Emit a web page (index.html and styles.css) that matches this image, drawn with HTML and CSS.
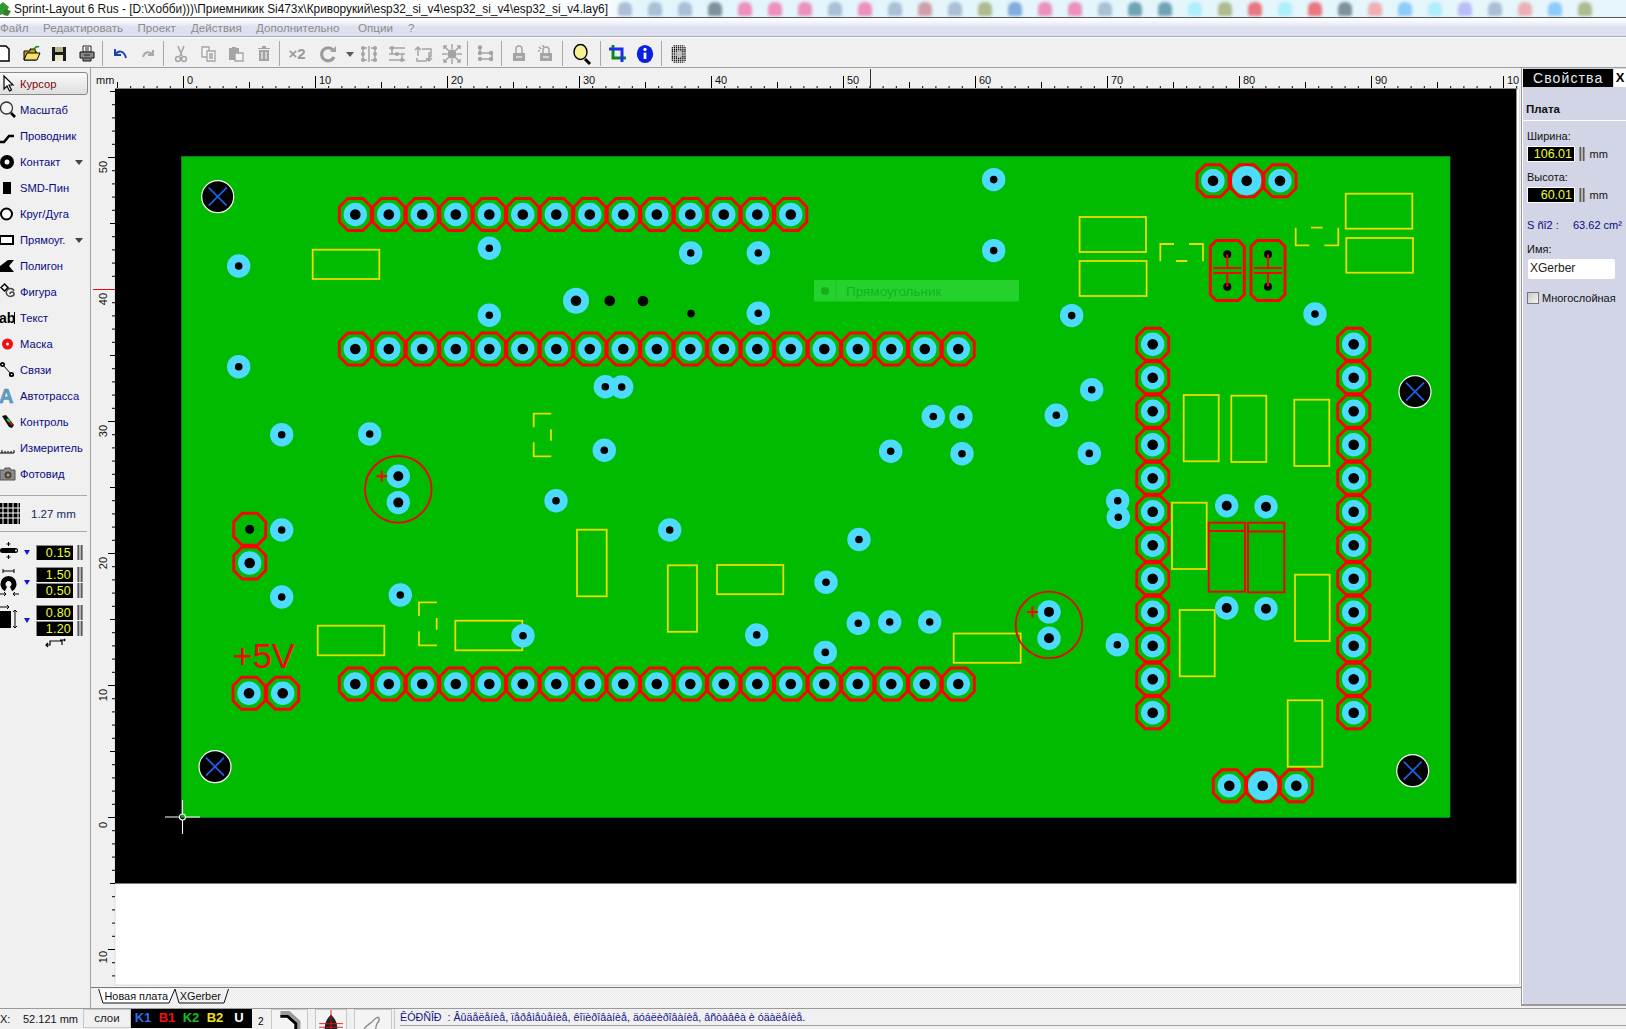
FILE: index.html
```html
<!DOCTYPE html>
<html lang="ru">
<head>
<meta charset="utf-8">
<title>Sprint-Layout 6 Rus</title>
<link rel="stylesheet" href="styles.css">
</head>
<body>
<div class="app">
  <header class="titlebar">
    <svg class="appicon" viewBox="0 0 12 17" width="12" height="17"><path class="ai-g" d="M-2 5 3 1 9 6 6 12 0 14Z"/><path class="ai-r" d="M5 8 11 10 8 15 3 14Z"/></svg>
    <span class="titletext">Sprint-Layout 6 Rus - [D:\Хобби)))\Приемникик Si473x\Криворукий\esp32_si_v4\esp32_si_v4\esp32_si_v4.lay6]</span>
    <div class="bottles">
      <i class="b-grey"></i><i class="b-grey"></i><i class="b-grey"></i><i class="b-dark"></i><i class="b-pink"></i><i class="b-pink"></i><i class="b-pink"></i><i class="b-grey"></i><i class="b-pink"></i><i class="b-grey"></i><i class="b-rose"></i><i class="b-grey"></i><i class="b-olive"></i><i class="b-blue"></i><i class="b-pink"></i><i class="b-pink"></i><i class="b-grey"></i><i class="b-teal"></i><i class="b-teal"></i><i class="b-cyan"></i><i class="b-olive"></i><i class="b-red"></i><i class="b-cyan"></i><i class="b-red"></i><i class="b-dark"></i><i class="b-salmon"></i><i class="b-sky"></i><i class="b-cyan"></i><i class="b-violet"></i><i class="b-grey"></i><i class="b-salmon"></i><i class="b-sky"></i><i class="b-olive"></i>
    </div>
  </header>

  <nav class="menubar">
    <span class="m1">Файл</span><span class="m2">Редактировать</span><span class="m3">Проект</span><span class="m4">Действия</span><span class="m5">Дополнительно</span><span class="m6">Опции</span><span>?</span>
  </nav>

  <div class="toolbar">
    <button class="tb first"><svg viewBox="0 0 20 20"><path class="doc" d="M5 2H12L15 5V17H5Z"/></svg></button>
    <button class="tb"><svg viewBox="0 0 20 20"><path class="fold" d="M2 7H8V5H13V7H14V16H2Z"/><path class="fold2" d="M2 16 5 9H18L15 16Z"/><path class="grn" d="M12 6C13 3 15 2 17 3"/></svg></button>
    <button class="tb"><svg viewBox="0 0 20 20"><rect class="flop" x="3" y="3" width="14" height="14"/><rect class="flop-a" x="6" y="3" width="8" height="5"/><rect class="flop-b" x="6" y="11" width="8" height="6"/></svg></button>
    <button class="tb"><svg viewBox="0 0 20 20"><path class="prn" d="M6 2H14V8H6Z"/><path class="prn2" d="M3 8H17V14H14V17H6V14H3Z"/><path class="ln" d="M7 11H13M7 14H13M8 4H12M8 6H12"/></svg></button>
    <span class="sep"></span>
    <button class="tb"><svg viewBox="0 0 20 20"><path class="undo" d="M5 5V11H11M5 11C8 6 14 6 16 14"/></svg></button>
    <button class="tb"><svg viewBox="0 0 20 20"><path class="redo" d="M15 6V11H10M15 11C12 7 7 7 5 13"/></svg></button>
    <span class="sep"></span>
    <button class="tb"><svg viewBox="0 0 20 20"><path class="off" d="M7 2 11 12M13 2 9 12"/><circle class="off" cx="7" cy="15" r="2.4"/><circle class="off" cx="13" cy="15" r="2.4"/></svg></button>
    <button class="tb"><svg viewBox="0 0 20 20"><path class="off-w" d="M3 3H10V13H3Z"/><path class="off-w" d="M8 7H16V17H8Z"/><path class="off" d="M10 10H14M10 12H14M10 14H14"/></svg></button>
    <button class="tb"><svg viewBox="0 0 20 20"><path class="off-f" d="M3 4H13V16H3Z"/><path class="off-w" d="M9 9H17V17H9Z"/><path class="off-f" d="M6 3H10V6H6Z"/></svg></button>
    <button class="tb"><svg viewBox="0 0 20 20"><path class="off-f" d="M5 6H15V17H5Z"/><path class="off-f" d="M4 4H16V5H4ZM8 2H12V4H8Z"/><path class="off-wl" d="M8 8V15M12 8V15"/></svg></button>
    <span class="sep"></span>
    <button class="tb tb-x2">×2</button>
    <button class="tb tb-rot"><svg viewBox="0 0 20 20"><path class="rot" d="M15 6A6.5 6.5 0 1 0 16 13"/><path class="off-f" d="M12 8H18V2Z"/></svg></button>
    <button class="tb tb-arr"><svg viewBox="0 0 8 20"><path class="arrow" d="M0 8H8L4 13Z"/></svg></button>
    <button class="tb"><svg viewBox="0 0 20 20"><path class="off" d="M10 2V18M2 4H8M2 16H8M12 4H18M12 16H18M4 4V16M16 4V16"/><circle class="off-f" cx="4" cy="4" r="2"/><circle class="off-f" cx="4" cy="16" r="2"/><circle class="off-f" cx="16" cy="4" r="2"/><circle class="off-f" cx="16" cy="16" r="2"/><circle class="off-f" cx="4" cy="10" r="2"/><circle class="off-f" cx="16" cy="10" r="2"/></svg></button>
    <button class="tb"><svg viewBox="0 0 20 20"><path class="off" d="M2 4H18M2 16H18M2 10H18M5 4V10M15 10V16"/><circle class="off-f" cx="5" cy="4" r="2"/><circle class="off-f" cx="15" cy="16" r="2"/><circle class="off-f" cx="10" cy="10" r="2"/></svg></button>
    <button class="tb"><svg viewBox="0 0 20 20"><path class="off" d="M4 3V12M1 6 4 3 7 6M15 17V8M12 14 15 17 18 14M8 5H17V12L12 17H3V14"/></svg></button>
    <button class="tb"><svg viewBox="0 0 20 20"><circle class="off-f" cx="10" cy="10" r="4.500"/><path class="off" d="M2 2 7 7M18 2 13 7M2 18 7 13M18 18 13 13M10 0V5M10 15V20M0 10H5M15 10H20M2 5V2H5M15 2H18V5M2 15V18H5M15 18H18V15"/></svg></button>
    <span class="sep"></span>
    <button class="tb"><svg viewBox="0 0 20 20"><path class="off" d="M5 3V9L17 9V15H5"/><circle class="off-f" cx="5" cy="3.500" r="2.200"/><circle class="off-f" cx="5" cy="9" r="2.200"/><circle class="off-f" cx="16" cy="9" r="2.200"/><circle class="off-f" cx="5" cy="15" r="2.200"/><circle class="off-f" cx="16" cy="15" r="2.200"/></svg></button>
    <span class="sep"></span>
    <button class="tb"><svg viewBox="0 0 20 20"><path class="off" d="M7 9V5A3 3 0 0 1 13 5V9"/><rect class="off-f" x="4" y="9" width="12" height="8"/><path class="off-wl" d="M7 13H13"/></svg></button>
    <button class="tb"><svg viewBox="0 0 20 20"><path class="off" d="M7 9V6A3 3 0 0 1 13 6V9M3 3 5 5M2 7H4M7 1V3"/><rect class="off-f" x="4" y="9" width="12" height="8"/><path class="off-wl" d="M7 13H13"/></svg></button>
    <span class="sep"></span>
    <button class="tb tb-mag"><svg viewBox="0 0 20 22"><ellipse class="mag" cx="8.500" cy="9" rx="6.500" ry="7.500"/><path class="mag-h" d="M13 16 18 21"/></svg></button>
    <span class="sep"></span>
    <button class="tb"><svg viewBox="0 0 20 20"><path class="crop-g" d="M5 1V14H18"/><path class="crop-b" d="M1 5H14V18"/></svg></button>
    <button class="tb"><svg viewBox="0 0 20 22"><ellipse class="info" cx="10" cy="11" rx="9" ry="10"/><circle class="info-i" cx="10" cy="6" r="1.800"/><path class="info-l" d="M10 9.500V16.500"/></svg></button>
    <span class="sep"></span>
    <button class="tb"><svg viewBox="0 0 20 22"><path class="dots" d="M4 2H16M2 4H18M2 6H18M2 8H18M2 10H18M2 12H18M2 14H18M2 16H18M2 18H18M4 20H16"/><ellipse class="dots-h" cx="10" cy="11" rx="3" ry="4"/></svg></button>
  </div>

  <div class="main">
    <aside class="tools">
      <div class="tool active"><svg viewBox="0 0 20 20"><path class="i-cursor" d="M4 2V15L7 12 9.500 17 11.500 16 9 11H13Z"/></svg><span class="cursor-name">Курсор</span></div>
      <div class="tool"><svg viewBox="0 0 20 20"><circle class="i-mag" cx="6.500" cy="8" r="6"/><path class="i-stroke3" d="M11 13 15 17"/></svg><span>Масштаб</span></div>
      <div class="tool"><svg viewBox="0 0 20 20"><path class="i-stroke3" d="M0 16H4L9 10H14"/></svg><span>Проводник</span></div>
      <div class="tool"><svg viewBox="0 0 20 20"><circle class="i-black" cx="7" cy="10" r="7"/><circle class="i-white" cx="7" cy="10" r="2.500"/></svg><span>Контакт</span><b class="caret"></b></div>
      <div class="tool"><svg viewBox="0 0 20 20"><rect class="i-black" x="3" y="4" width="8" height="12"/></svg><span>SMD-Пин</span></div>
      <div class="tool"><svg viewBox="0 0 20 20"><circle class="i-ring" cx="6.500" cy="10" r="5.500"/></svg><span>Круг/Дуга</span></div>
      <div class="tool"><svg viewBox="0 0 20 20"><rect class="i-ring" x="0" y="6" width="13" height="8"/></svg><span>Прямоуг.</span><b class="caret"></b></div>
      <div class="tool"><svg viewBox="0 0 20 20"><path class="i-black" d="M0 16V10L8 4H14L9 10 14 16Z"/></svg><span>Полигон</span></div>
      <div class="tool"><svg viewBox="0 0 20 20"><path class="i-diamond" d="M4.500 2 8 5.500 4.500 9 1 5.500Z"/><path class="i-spiral" d="M10 12A2 2 0 1 1 12 14A4 4 0 1 1 14 9"/></svg><span>Фигура</span></div>
      <div class="tool"><svg class="ab-svg" viewBox="0 0 20 20"><text class="i-ab" x="-1" y="14.500">ab</text><path class="i-line" d="M14.500 4V16"/></svg><span>Текст</span></div>
      <div class="tool"><svg viewBox="0 0 20 20"><circle class="i-red" cx="7.500" cy="10" r="5.500"/><circle class="i-white" cx="7.500" cy="10" r="1.500"/></svg><span>Маска</span></div>
      <div class="tool"><svg viewBox="0 0 20 20"><path class="i-line" d="M3 5 11 14"/><circle class="i-hole" cx="2.500" cy="4.500" r="1.700"/><circle class="i-hole" cx="11.500" cy="14.500" r="1.700"/></svg><span>Связи</span></div>
      <div class="tool"><svg viewBox="0 0 20 20"><text class="i-a" x="-1" y="17">A</text></svg><span>Автотрасса</span></div>
      <div class="tool"><svg viewBox="0 0 20 20"><path class="i-probe" d="M2 4 6 3 14 13 12 16 9 15Z"/><path class="i-probe-g" d="M7 7 10 10"/><path class="i-probe-r" d="M10 10 12 13"/></svg><span>Контроль</span></div>
      <div class="tool"><svg viewBox="0 0 20 20"><path class="i-line" d="M0 15H14M2 15V12M5 15V13M8 15V13M11 15V13M14 15V12"/></svg><span>Измеритель</span></div>
      <div class="tool"><svg viewBox="0 0 20 20"><path class="i-cam" d="M0 6H4L5 4H10L11 6H15V16H0Z"/><circle class="i-cam-l" cx="8" cy="11" r="3.500"/><circle class="i-cam-o" cx="8" cy="11" r="1.500"/></svg><span>Фотовид</span></div>

      <div class="gridrow">
        <svg class="gridicon" viewBox="0 0 20 21"><rect class="i-black" width="20" height="21"/><path class="i-gridl" d="M0 5H20M0 10H20M0 15H20M3 0V21M8 0V21M13 0V21M18 0V21"/></svg>
        <span>1.27 mm</span>
      </div>

      <div class="params">
        <div class="pgroup">
          <svg class="picon" viewBox="0 0 20 20"><path class="i-line" d="M8.500 0V4M6.500 2H10.500M8.500 13V17M6.500 15H10.500"/><rect class="i-black" x="0" y="6" width="18" height="5" rx="2.500"/><circle class="i-white" cx="16" cy="8.500" r="1"/></svg>
          <b class="bluecaret"></b>
          <div class="pfields"><div class="pfield"><output>0.15</output><i class="spin"></i></div></div>
        </div>
        <div class="pgroup">
          <svg class="picon" viewBox="0 0 20 28"><path class="i-line" d="M3 3H14M3 1V5M14 1V5"/><path class="i-cshape" d="M6 21A5.500 5.500 0 1 1 11 21"/><path class="i-line" d="M0 26H6M4 24 6 26 4 28M13 26H19M15 24 13 26 15 28"/></svg>
          <b class="bluecaret"></b>
          <div class="pfields"><div class="pfield"><output>1.50</output><i class="spin"></i></div><div class="pfield"><output>0.50</output><i class="spin"></i></div></div>
        </div>
        <div class="pgroup">
          <svg class="picon" viewBox="0 0 20 32"><path class="i-line" d="M0 3H9M7 1 9 3 7 5"/><rect class="i-black" x="0" y="7" width="11" height="17"/><path class="i-line" d="M15 6V24M13 8 15 6 17 8M13 22 15 24 17 22"/></svg>
          <b class="bluecaret"></b>
          <div class="pfields"><div class="pfield"><output>0.80</output><i class="spin"></i></div><div class="pfield"><output>1.20</output><i class="spin"></i></div></div>
        </div>
        <svg class="swap" viewBox="0 0 22 8"><path class="i-swap" d="M1 6H5V2H17V6M3 4 1 6 3 8M15 1H20M19 0 20 1 19 2"/></svg>
      </div>
    </aside>

    <section class="center">
      <svg class="work" viewBox="91 68 1430 918" width="1430" height="918">
        <defs>
          <pattern id="hticks" patternUnits="userSpaceOnUse" x="183" y="68" width="132" height="21">
            <path class="tick" d="M.5 8V21M66.500 14V21M13.700 18V21M26.900 18V21M40.100 18V21M53.300 18V21M79.700 18V21M92.900 18V21M106.100 18V21M119.300 18V21"/>
          </pattern>
          <pattern id="vticks" patternUnits="userSpaceOnUse" x="91" y="157" width="24" height="132">
            <path class="tick" d="M17 .5H24M19 66.500H24M21 13.700H24M21 26.900H24M21 40.100H24M21 53.300H24M21 79.700H24M21 92.900H24M21 106.100H24M21 119.300H24"/>
          </pattern>
          <path id="oct" class="oct" d="M-7.500-16H7.500L16-7.500V7.500L7.500 16H-7.500L-16 7.500V-7.500Z"/>
          <g id="via"><circle class="cu" r="11.700"/><circle class="hole" r="3.800"/></g>
          <g id="via2"><circle class="cu" r="11.700"/><circle class="hole" r="5"/></g>
          <g id="via3"><circle class="cu" r="13"/><circle class="hole" r="5.300"/></g>
          <g id="pad"><use href="#oct"/><circle class="cu" r="11.700"/><circle class="hole" r="5.300"/></g>
          <g id="padbig"><use href="#oct"/><circle class="cu" r="14.700"/><circle class="hole" r="5.300"/></g>
          <g id="padhole"><use href="#oct"/><circle class="hole" r="4.500"/></g>
          <g id="mount"><circle class="mount" r="16"/><path class="mountx" d="M-9-9 9 9M9-9-9 9"/></g>
          <g id="row14">
            <use href="#pad" x="0"/><use href="#pad" x="33.500"/><use href="#pad" x="67"/><use href="#pad" x="100.500"/><use href="#pad" x="134"/><use href="#pad" x="167.500"/><use href="#pad" x="201"/><use href="#pad" x="234.500"/><use href="#pad" x="268"/><use href="#pad" x="301.500"/><use href="#pad" x="335"/><use href="#pad" x="368.500"/><use href="#pad" x="402"/><use href="#pad" x="435.500"/>
          </g>
          <g id="row19">
            <use href="#row14"/><use href="#pad" x="469"/><use href="#pad" x="502.500"/><use href="#pad" x="536"/><use href="#pad" x="569.500"/><use href="#pad" x="603"/>
          </g>
          <g id="col12">
            <use href="#pad" y="0"/><use href="#pad" y="33.500"/><use href="#pad" y="67"/><use href="#pad" y="100.500"/><use href="#pad" y="134"/><use href="#pad" y="167.500"/><use href="#pad" y="201"/><use href="#pad" y="234.500"/><use href="#pad" y="268"/><use href="#pad" y="301.500"/><use href="#pad" y="335"/><use href="#pad" y="368.500"/>
          </g>
          <g id="capbody">
            <path class="oct" d="M-11-30H11L17-24V24L11 30H-11L-17 24V-24Z"/>
            <circle class="hole" cy="-16.300" r="4"/><circle class="hole" cy="16.300" r="4"/>
            <path class="redline" d="M0-16V-3.500M0 3.500V16M-14-2.600H14M-14 2.600H14"/>
          </g>
          <g id="elco">
            <circle class="capring" r="33.300"/>
            <use href="#via2" y="-13"/><use href="#via2" y="13.300"/>
            <path class="redline" d="M-16.600-18.500V-7.500M-22-13H-11"/>
          </g>
        </defs>

        <rect class="rulerbg" x="91" y="68" width="1430" height="918"/>
        <rect class="paper" x="115" y="89" width="1404.500" height="896"/>
        <rect class="pfill-h" x="115" y="68" width="1405" height="21"/>
        <rect class="pfill-v" x="91" y="89" width="24" height="897"/>

        <g class="rlabels">
          <text x="96" y="84">mm</text>
          <text x="187" y="84">0</text><text x="319" y="84">10</text><text x="451" y="84">20</text><text x="583" y="84">30</text><text x="715" y="84">40</text><text x="847" y="84">50</text><text x="979" y="84">60</text><text x="1111" y="84">70</text><text x="1243" y="84">80</text><text x="1375" y="84">90</text><text x="1507" y="84">10</text>
          <text class="vlabel" transform="translate(107 167) rotate(-90)">50</text>
          <text class="vlabel" transform="translate(107 299) rotate(-90)">40</text>
          <text class="vlabel" transform="translate(107 431) rotate(-90)">30</text>
          <text class="vlabel" transform="translate(107 563) rotate(-90)">20</text>
          <text class="vlabel" transform="translate(107 695) rotate(-90)">10</text>
          <text class="vlabel" transform="translate(107 825) rotate(-90)">0</text>
          <text class="vlabel" transform="translate(107 957) rotate(-90)">10</text>
        </g>
        <path class="marker-k" d="M870.500 69V88"/>
        <path class="marker-r" d="M93 289.500H115"/>

        <rect class="canvas" x="115" y="89" width="1401" height="794.500"/>
        <path class="canvas-edge" d="M115 88.500H1516.500V883.500"/>
        <rect class="board" x="181.500" y="156.500" width="1268.500" height="661"/>

        <!-- silkscreen -->
        <g class="silk">
          <rect x="312.700" y="249.700" width="66.600" height="29.300"/>
          <rect x="317.700" y="625.700" width="66.600" height="29.600"/>
          <rect x="455.300" y="620.700" width="67" height="29.600"/>
          <rect x="577" y="529.700" width="29.700" height="66.600"/>
          <rect x="667.800" y="565.300" width="29.200" height="66.500"/>
          <rect x="717" y="565" width="66.300" height="29.200"/>
          <rect x="953.700" y="633.500" width="67" height="29.300"/>
          <rect x="1079.600" y="217" width="66.400" height="35"/>
          <rect x="1079.600" y="261" width="67" height="35"/>
          <rect x="1345.700" y="193.700" width="66.600" height="35"/>
          <rect x="1346.300" y="238" width="66.700" height="34.700"/>
          <rect x="1183.700" y="395" width="35" height="66.300"/>
          <rect x="1231.300" y="395.700" width="35" height="66.300"/>
          <rect x="1294.300" y="399.700" width="35" height="66.300"/>
          <rect x="1172" y="502.700" width="34.700" height="66.300"/>
          <rect x="1179.700" y="610" width="35" height="66.300"/>
          <rect x="1295" y="574.700" width="34.700" height="66.300"/>
          <rect x="1287.700" y="700.300" width="34.600" height="66.400"/>
          <path d="M1160.300 261.300V244H1174M1189 244H1203V261.300M1176 261H1187.300"/>
          <path d="M1295.700 227.700V245.300H1309.300M1324.300 245.300H1338.300V227.700M1311 227.700H1322.700"/>
          <path d="M551.300 413.700H533.700V427.300M533.700 442.300V456.300H551.300M551 429.300V440.700"/>
          <path d="M437 602.300H419V616M419 631.300V645.300H437M436.700 618V629.700"/>
        </g>

        <!-- red outlines -->
        <g class="thinred">
          <rect x="1208.700" y="522.700" width="36.300" height="69"/>
          <path d="M1208.700 531H1245"/>
          <rect x="1248" y="522.700" width="36.300" height="69.600"/>
          <path d="M1248 531.500H1284.300"/>
        </g>
        <use href="#capbody" x="1227.300" y="270.500"/>
        <use href="#capbody" x="1268" y="270.500"/>
        <use href="#elco" x="398.300" y="489.300"/>
        <use href="#elco" x="1049" y="624.900"/>

        <!-- pad rows -->
        <use href="#row14" x="355.300" y="214.500"/>
        <use href="#row19" x="355.300" y="349"/>
        <use href="#row19" x="355.300" y="684"/>
        <use href="#col12" x="1152.700" y="344.300"/>
        <use href="#col12" x="1353.700" y="344.300"/>
        <use href="#pad" x="1213" y="180.700"/><use href="#padbig" x="1246.700" y="180.700"/><use href="#pad" x="1280" y="180.700"/>
        <use href="#pad" x="1229.300" y="785.700"/><use href="#padbig" x="1262.700" y="785.700"/><use href="#pad" x="1296.300" y="785.700"/>
        <use href="#padhole" x="249.700" y="529.300"/><use href="#pad" x="249.700" y="563"/>
        <use href="#pad" x="249" y="693.300"/><use href="#pad" x="282.700" y="693.300"/>

        <!-- vias -->
        <use href="#via" x="238.700" y="266"/><use href="#via" x="238.700" y="366.700"/>
        <use href="#via" x="489.300" y="248.300"/><use href="#via" x="489.300" y="315.300"/>
        <use href="#via3" x="576" y="300.700"/>
        <circle class="hole" cx="609.700" cy="300.700" r="5.300"/><circle class="hole" cx="643" cy="301" r="5.300"/>
        <circle class="hole" cx="691" cy="313.600" r="3.800"/>
        <use href="#via" x="690.700" y="253"/><use href="#via" x="758.300" y="253"/><use href="#via" x="758.300" y="313.200"/>
        <use href="#via" x="605.300" y="386.700"/><use href="#via" x="621.700" y="387"/>
        <use href="#via" x="281.700" y="434.700"/><use href="#via" x="369.700" y="434"/>
        <use href="#via" x="604.300" y="450.300"/><use href="#via" x="556" y="500.700"/>
        <use href="#via" x="669.700" y="530"/><use href="#via" x="281.700" y="530"/><use href="#via" x="281.700" y="597"/>
        <use href="#via" x="400.300" y="595"/><use href="#via" x="523" y="635.700"/>
        <use href="#via" x="993.700" y="179.600"/><use href="#via" x="993.700" y="250.600"/>
        <use href="#via" x="1071.700" y="315.600"/><use href="#via" x="1091.700" y="389.700"/>
        <use href="#via" x="1056.300" y="415.200"/><use href="#via" x="1089.300" y="453.400"/>
        <use href="#via" x="933.300" y="416.500"/><use href="#via" x="961" y="416.900"/>
        <use href="#via" x="890.700" y="451.300"/><use href="#via" x="962" y="453.700"/>
        <use href="#via" x="859" y="539.500"/><use href="#via" x="826" y="582.200"/>
        <use href="#via" x="858.300" y="623.200"/><use href="#via" x="889.700" y="622"/><use href="#via" x="929.700" y="622"/>
        <use href="#via" x="825.300" y="652.400"/><use href="#via" x="756.700" y="634.900"/>
        <use href="#via" x="1117.700" y="500.700"/><use href="#via" x="1118.300" y="517.300"/><use href="#via" x="1117.300" y="644.700"/>
        <use href="#via" x="1315" y="314"/>
        <use href="#via2" x="1226.700" y="505.700"/><use href="#via2" x="1266" y="506.700"/>
        <use href="#via2" x="1226.700" y="608"/><use href="#via2" x="1266" y="608.700"/>

        <use href="#mount" x="217.700" y="196.700"/><use href="#mount" x="1415" y="391.700"/>
        <use href="#mount" x="215" y="766.700"/><use href="#mount" x="1412.700" y="770.700"/>

        <text class="plus5" x="232.500" y="668">+5V</text>

        <rect class="tip" x="814" y="280" width="205" height="21.500"/>
        <circle class="tip-dot" cx="825" cy="291" r="4"/>
        <path class="tip-sep" d="M835.700 280V301.500"/>
        <text class="tip-text" x="846" y="295.500">Прямоугольник</text>

        <g class="crosshair">
          <path d="M182.500 800V814M182.500 820V834M165 817H179.500M185.500 817H200"/>
          <circle cx="182.500" cy="817" r="3"/>
        </g>
      </svg>

      <div class="tabs">
        <svg viewBox="0 0 150 20" width="150" height="20">
          <path class="tab-b" d="M84 0 88 14H133L137.500 0"/>
          <path class="tab-a" d="M7.700 0 12 14H78L84 0"/>
          <text class="tab-t" x="13.500" y="11">Новая плата</text>
          <text class="tab-t" x="88.700" y="11">XGerber</text>
        </svg>
      </div>
    </section>

    <aside class="props">
      <div class="props-head"><span class="props-title">Свойства</span><span class="props-x">X</span></div>
      <div class="props-sec">Плата</div>
      <div class="props-body">
        <label class="lbl first-lbl">Ширина:</label>
        <div class="pr-row"><output class="pr-field">106.01</output><i class="spin"></i><span>mm</span></div>
        <label class="lbl">Высота:</label>
        <div class="pr-row"><output class="pr-field">60.01</output><i class="spin"></i><span>mm</span></div>
        <div class="area"><span class="area-k">S ñî2 :</span><span>63.62 cm²</span></div>
        <label class="lbl name-lbl">Имя:</label>
        <div class="nameinput">XGerber</div>
        <div class="check"><i class="cb"></i><span>Многослойная</span></div>
      </div>
    </aside>
  </div>

  <footer class="status">
    <div class="coord"><span>X:</span><span>52.121 mm</span></div>
    <div class="layers-lbl">слои</div>
    <div class="layers"><b class="lk1">K1</b><b class="lb1">B1</b><b class="lk2">K2</b><b class="lb2">B2</b><b class="lu">U</b></div>
    <span class="two">2</span>
    <div class="sbtn sbtn1"><svg viewBox="0 0 36 22"><path class="s-gray" d="M8 1H18L30 12V22H23V15L15 8H8Z"/><path class="s-black" d="M8 7H16L25 15V22"/></svg></div>
    <div class="sbtn sbtn2"><svg viewBox="0 0 30 22"><path class="s-k" d="M15 5C11 9 8 13 8 22H22C22 13 19 9 15 5Z"/><path class="s-red" d="M15 0V22M2 15H28M2 19H28"/></svg></div>
    <div class="sbtn sbtn3"><svg viewBox="0 0 38 22"><path class="s-curve" d="M9 22C10 18 14 16 18 13C20 11 21 9 24 8C27 8 26 12 24 14C22 17 22 20 22 22"/></svg></div>
    <div class="hint"><span>ÊÓÐÑÎÐ  : Âûäåëåíèå, ïåðåìåùåíèå, êîïèðîâàíèå, äóáëèðîâàíèå, âñòàâêà è óäàëåíèå.</span></div>
  </footer>
</div>
</body>
</html>
```
FILE: styles.css
```css
* { box-sizing: border-box; }
html, body { margin: 0; padding: 0; height: 100%; overflow: hidden; }
body { font-family: "Liberation Sans", Arial, sans-serif; font-size: 12px; color: #000; background: #f0f0f0; }
.app { width: 1626px; height: 1029px; display: flex; flex-direction: column; overflow: hidden; }

/* Title bar */
.titlebar { height: 18px; flex: none; display: flex; align-items: center; position: relative; overflow: hidden;
  background: linear-gradient(90deg, #ffffff 0, #fdfeff 600px, #e3f5fb 640px, #e6f6fb 100%);
  border-bottom: 1px solid #5a5a5a; }
.appicon { flex: none; margin-top: 1px; }
.ai-g { fill: #2e9a2e; }
.ai-r { fill: #3a7a2a; }
.titletext { margin-left: 2px; font-size: 11.850px; white-space: nowrap; color: #111; position: relative; z-index: 1; }
.bottles { position: absolute; left: 618px; top: 2px; display: flex; gap: 16px; filter: blur(1.6px); }
.bottles i { display: block; width: 14px; height: 14px; border-radius: 6px 6px 2px 2px; opacity: .85; }
.b-grey { background: #9fb6cf; } .b-dark { background: #6c7f8e; } .b-pink { background: #ee7eb2; }
.b-rose { background: #cf8f9a; } .b-olive { background: #a3b07a; } .b-blue { background: #6f9fd8; }
.b-teal { background: #5d95a4; } .b-cyan { background: #a4ecfb; } .b-red { background: #ea5f6c; }
.b-salmon { background: #f0a3a8; } .b-sky { background: #7dc3fb; } .b-violet { background: #b5b2f8; }

/* Menu */
.menubar { height: 19px; flex: none; display: flex; align-items: center; color: #8c8c8c; font-size: 11.600px;
  background: linear-gradient(#ffffff 0, #f2f4fa 25%, #dde1f0 50%, #dce0ef 100%);
  border-bottom: 1px solid #a6aab8; }
.menubar span { white-space: nowrap; }
.m1 { width: 43px; } .m2 { width: 94.500px; } .m3 { width: 53.500px; } .m4 { width: 65px; } .m5 { width: 102px; } .m6 { width: 50px; }

/* Toolbar */
.toolbar { height: 31px; flex: none; display: flex; align-items: center; padding-top: 2px; background: #f0f0f0; border-top: 1px solid #fff; border-bottom: 1px solid #a0a0a0; }
.tb { width: 27.500px; height: 26px; padding: 0; border: 0; background: none; flex: none; display: flex; align-items: center; justify-content: center; font-family: inherit; }
.tb svg { width: 20px; height: 20px; display: block; overflow: visible; }
.tb.first { margin-left: -9.750px; }
.sep { width: 6px; height: 25px; flex: none; position: relative; }
.sep::before { content: ""; position: absolute; left: 2px; top: 0; bottom: 0; width: 1px; background: #a8a8a8; }
.tb-x2 { font-weight: bold; color: #9a9a9a; font-size: 15px; }
.tb-rot { width: 34.500px; justify-content: flex-end; padding-right: 7px; }
.tb-arr { width: 10px; }
.tb-arr svg { width: 8px; }
.tb-mag { width: 32px; }
.tb-mag svg { height: 22px; }

.doc { fill: #fff; stroke: #000; stroke-width: 1.5; }
.fold { fill: #c8a800; stroke: #000; stroke-width: 1; }
.fold2 { fill: #f5e070; stroke: #000; stroke-width: 1; }
.grn { fill: none; stroke: #1a8a1a; stroke-width: 1.5; }
.flop { fill: #1a1a1a; }
.flop-a { fill: #b5b58a; }
.flop-b { fill: #e8e8c8; }
.prn { fill: #fff; stroke: #222; }
.prn2 { fill: #888; stroke: #111; }
.ln { stroke: #222; fill: none; }
.undo { fill: none; stroke: #1a3fb0; stroke-width: 2; }
.redo { fill: none; stroke: #a8a8a8; stroke-width: 2; }
.off { fill: none; stroke: #a4a4a4; stroke-width: 1.500; }
.off-w { fill: #f4f4f4; stroke: #a4a4a4; stroke-width: 1.300; }
.off-f { fill: #a4a4a4; }
.off-wl { fill: none; stroke: #f0f0f0; stroke-width: 1.300; }
.rot { fill: none; stroke: #9c9c9c; stroke-width: 3.200; }
.arrow { fill: #5a5a5a; }
.mag { fill: #f6f294; stroke: #000; stroke-width: 1.400; }
.mag-h { stroke: #000; stroke-width: 3; }
.crop-g { fill: none; stroke: #0a8a1a; stroke-width: 3; }
.crop-b { fill: none; stroke: #1a30e8; stroke-width: 3; }
.info { fill: #0a1fe0; }
.info-i { fill: #fff; }
.info-l { stroke: #fff; stroke-width: 3; }
.dots { fill: none; stroke: #1a1a1a; stroke-width: 1.500; stroke-dasharray: 1.500 .8; }
.dots-h { fill: #c0c0c0; }

/* Layout */
.main { flex: none; height: 940px; display: flex; }
.tools { width: 91px; flex: none; border-right: 1px solid #a0a0a0; padding-top: 3px; background: #f0f0f0; }
.tool { height: 26px; display: flex; align-items: center; color: #0a0a80; font-size: 11.200px; position: relative; white-space: nowrap; }
.tool svg { width: 20px; height: 20px; flex: none; overflow: visible; }
.tool.active { margin-right: 2px; }
.tool.active::before { content: ""; position: absolute; left: -3px; right: 0; top: 1px; bottom: 2px; border: 1px solid #8a8a8a; border-radius: 3px; background: linear-gradient(#fafafa, #dedede); }
.tool.active > * { position: relative; }
.cursor-name { color: #7a0a0a; }
.caret { position: absolute; right: 7px; top: 11px; width: 0; height: 0; border: 4px solid transparent; border-top: 5px solid #444; border-bottom: 0; }

.i-cursor { fill: #fff; stroke: #000; stroke-width: 1.200; }
.i-mag { fill: #f4f4f4; stroke: #333; stroke-width: 1.300; }
.i-stroke3 { fill: none; stroke: #000; stroke-width: 2.600; }
.i-black { fill: #000; }
.i-white { fill: #fff; }
.i-ring { fill: #fff; stroke: #000; stroke-width: 2; }
.i-diamond { fill: #fff; stroke: #000; stroke-width: 1.500; }
.i-spiral { fill: none; stroke: #444; stroke-width: 1.500; }
.i-ab { font: bold 14px "Liberation Sans", Arial, sans-serif; fill: #000; }
.i-line { fill: none; stroke: #000; stroke-width: 1; }
.i-swap { fill: none; stroke: #000; stroke-width: 1.200; }
.i-red { fill: #f01010; }
.i-hole { fill: #fff; stroke: #000; stroke-width: 1.800; }
.i-a { font: bold 20px "Liberation Sans", Arial, sans-serif; fill: #5f9fd0; stroke: #4a7a9a; stroke-width: .5; }
.i-probe { fill: #111; }
.i-probe-g { stroke: #2bd12b; stroke-width: 2; }
.i-probe-r { stroke: #e01010; stroke-width: 2; }
.i-cam { fill: #8a8a8a; stroke: #555; }
.i-cam-l { fill: #444; }
.i-cam-o { fill: #d9a04a; }
.i-gridl { stroke: #fff; stroke-width: 1; fill: none; }
.i-cshape { fill: none; stroke: #000; stroke-width: 5; }

.gridrow { height: 37px; margin-top: 8px; margin-right: 3px; display: flex; align-items: center; border-top: 1px solid #a8a8a8; border-bottom: 1px solid #a8a8a8; font-size: 11.500px; color: #0f2a5a; gap: 11px; }
.gridicon { width: 20px; height: 21px; flex: none; }
.params { padding-top: 10px; }
.pgroup { display: flex; align-items: center; margin-bottom: 4.500px; }
.pgroup:nth-child(2) { margin-bottom: 6.500px; }
.picon { width: 20px; flex: none; overflow: visible; height: 20px; }
.pgroup:nth-child(2) .picon { height: 28px; }
.pgroup:nth-child(3) .picon { height: 32px; }
.bluecaret { flex: none; margin: 0 6px 0 4px; width: 0; height: 0; border: 3.500px solid transparent; border-top: 5px solid #1414e6; border-bottom: 0; }
.pfields { display: flex; flex-direction: column; gap: 1px; }
.pfield { display: flex; align-items: center; }
.pfield output { width: 37px; height: 15px; background: #000; color: #ecff2a; text-align: right; padding-right: 2px; font-size: 12.500px; line-height: 15px; border-top: 1px solid #8a8a8a; border-left: 1px solid #8a8a8a; letter-spacing: .2px; }
.spin { display: block; width: 6px; height: 15px; margin-left: 3.500px; flex: none; background: linear-gradient(90deg, #c0c0c0, #4a4a4a 22%, #c0c0c0 44%, #c0c0c0 56%, #4a4a4a 78%, #c0c0c0); }
.swap { display: block; width: 22px; height: 8px; margin: -2px 0 0 45px; overflow: visible; }

.center { flex: none; width: 1430px; display: flex; flex-direction: column; background: #f0f0f0; }
.work { display: block; flex: none; }
.rulerbg { fill: #f0f0f0; }
.paper { fill: #fff; stroke: #dcdcdc; stroke-width: 1; }
.pfill-h { fill: url(#hticks); }
.pfill-v { fill: url(#vticks); }
.tick { stroke: #000; stroke-width: 1; fill: none; }
.rlabels text { font: 11px "Liberation Sans", Arial, sans-serif; fill: #111; }
.rlabels .vlabel { text-anchor: middle; }
.marker-k { stroke: #333; stroke-width: 1; }
.marker-r { stroke: #e01010; stroke-width: 1; }
.canvas { fill: #000; }
.canvas-edge { fill: none; stroke: #8c8c8c; stroke-width: 1; }
.board { fill: #00bb00; stroke: #0e8f3e; stroke-width: .6; }
.silk { fill: none; stroke: #ecdc00; stroke-width: 1.800; }
.thinred { fill: none; stroke: #f40000; stroke-width: 1.900; }
.oct { fill: none; stroke: #ff0000; stroke-width: 2.900; }
.cu { fill: #4ddcff; }
.hole { fill: #000; }
.redline { fill: none; stroke: #ff0000; stroke-width: 2; }
.capring { fill: none; stroke: #f40000; stroke-width: 1.800; }
.mount { fill: #000; stroke: #fff; stroke-width: 1.200; }
.mountx { stroke: #1e5fe6; stroke-width: 1.800; fill: none; }
.plus5 { font: 34.500px "Liberation Sans", Arial, sans-serif; fill: #ff0000; }
.tip { fill: #25d22d; }
.tip-dot { fill: #14b01c; }
.tip-sep { stroke: #20c528; stroke-width: 1; }
.tip-text { font: 13.500px "Liberation Sans", Arial, sans-serif; fill: #12b41c; }
.crosshair { fill: none; stroke: #fff; stroke-width: 1.100; }

/* Tabs */
.tabs { height: 22px; flex: none; padding-top: 1px; border-top: 1.500px solid #7a7a7a; margin-top: 1px;
  background: repeating-conic-gradient(#eaeaea 0 25%, #f7f7f7 0 50%) 0 0 / 2px 2px; }
.tabs svg { display: block; }
.tab-a { fill: #fff; stroke: #111; stroke-width: 1; }
.tab-b { fill: none; stroke: #111; stroke-width: 1; }
.tab-t { font: 10.900px "Liberation Sans", Arial, sans-serif; fill: #111; }

/* Properties panel */
.props { width: 105px; height: 938px; flex: none; background: #d1d5e5; border-left: 1px solid #9a9a9a; border-bottom: 2px solid #9a9a9a; box-shadow: inset 1px 0 0 #fff; overflow: hidden; font-size: 11px; }
.props-head { height: 19px; margin: 1px 0 0 1px; display: flex; }
.props-title { width: 90px; height: 18px; background: #000; color: #e6e9f4; font-size: 14px; line-height: 18px; padding-left: 10px; letter-spacing: 1.100px; white-space: nowrap; }
.props-x { flex: 1; margin-left: 1px; height: 18px; background: #fff; font-size: 13px; font-weight: bold; line-height: 18px; text-align: center; }
.props-sec { height: 33px; margin-left: 1px; padding: 15px 0 0 3px; font-weight: bold; font-size: 11.500px; color: #111; border-bottom: 1px solid #fff; }
.props-body { padding: 0 0 0 5px; color: #111; }
.lbl { display: block; height: 14px; line-height: 14px; margin-top: 8px; }
.first-lbl { margin-top: 8px; }
.pr-row { display: flex; align-items: center; height: 16px; margin-top: 3px; }
.pr-field { width: 48px; height: 16px; background: #000; color: #ecff2a; text-align: right; font-size: 12.500px; line-height: 14px; padding-right: 2px; border: 1px solid #fff; }
.pr-row .spin { height: 14px; margin-right: 5px; }
.area { display: flex; color: #0a0a80; margin-top: 16px; white-space: nowrap; }
.area-k { width: 46px; }
.name-lbl { margin-top: 11px; }
.nameinput { width: 87px; height: 20px; margin: 3px 0 0 1px; background: #fff; border-radius: 2px; padding-left: 2px; line-height: 19px; font-size: 12px; color: #222; }
.check { display: flex; align-items: center; gap: 3px; margin-top: 13px; white-space: nowrap; }
.cb { display: block; width: 12px; height: 12px; background: linear-gradient(135deg, #c8c8c8, #f6f6f6); border: 1px solid #777; flex: none; }

/* Status bar */
.status { height: 21px; flex: none; display: flex; align-items: flex-start; background: #f0f0f0; border-top: 1px solid #9a9a9a; position: relative; font-size: 11px; }
.coord { width: 83px; display: flex; height: 20px; line-height: 20px; color: #111; white-space: nowrap; }
.coord span:first-child { width: 23px; }
.layers-lbl { width: 48px; height: 19px; border: 1px solid #c8c8c8; text-align: center; line-height: 17px; font-size: 11.500px; color: #222; }
.layers { width: 121px; height: 19px; background: #000; display: flex; font-weight: bold; font-size: 13px; line-height: 18px; }
.layers b { display: block; width: 24px; text-align: center; }
.lk1 { color: #2a6fe8; } .lb1 { color: #f01010; } .lk2 { color: #10c020; } .lb2 { color: #f0e020; } .lu { color: #fff; }
.two { width: 19px; padding: 7px 0 0 6px; font-size: 10px; line-height: 12px; }
.sbtn { height: 21px; border: 1px solid #c8c8c8; border-bottom: 0; background: #f4f4f4; flex: none; }
.sbtn svg { display: block; width: 100%; height: 20px; }
.sbtn1 { width: 37px; }
.sbtn2 { width: 32px; margin-left: 7px; }
.sbtn3 { width: 38px; margin-left: 7px; }
.s-gray { fill: #9a9a9a; }
.s-black { fill: none; stroke: #000; stroke-width: 3; }
.s-k { fill: #222; }
.s-red { fill: none; stroke: #e01010; stroke-width: 1; }
.s-curve { fill: none; stroke: #888; stroke-width: 1.500; }
.hint { flex: 1; height: 20px; margin-left: 2px; padding-left: 5px; border-left: 1px solid #c8c8c8; }
.hint span { display: block; height: 17px; line-height: 17px; border-bottom: 1px solid #a0a0a0; color: #14148c; font-size: 10.700px; white-space: pre; }
```
